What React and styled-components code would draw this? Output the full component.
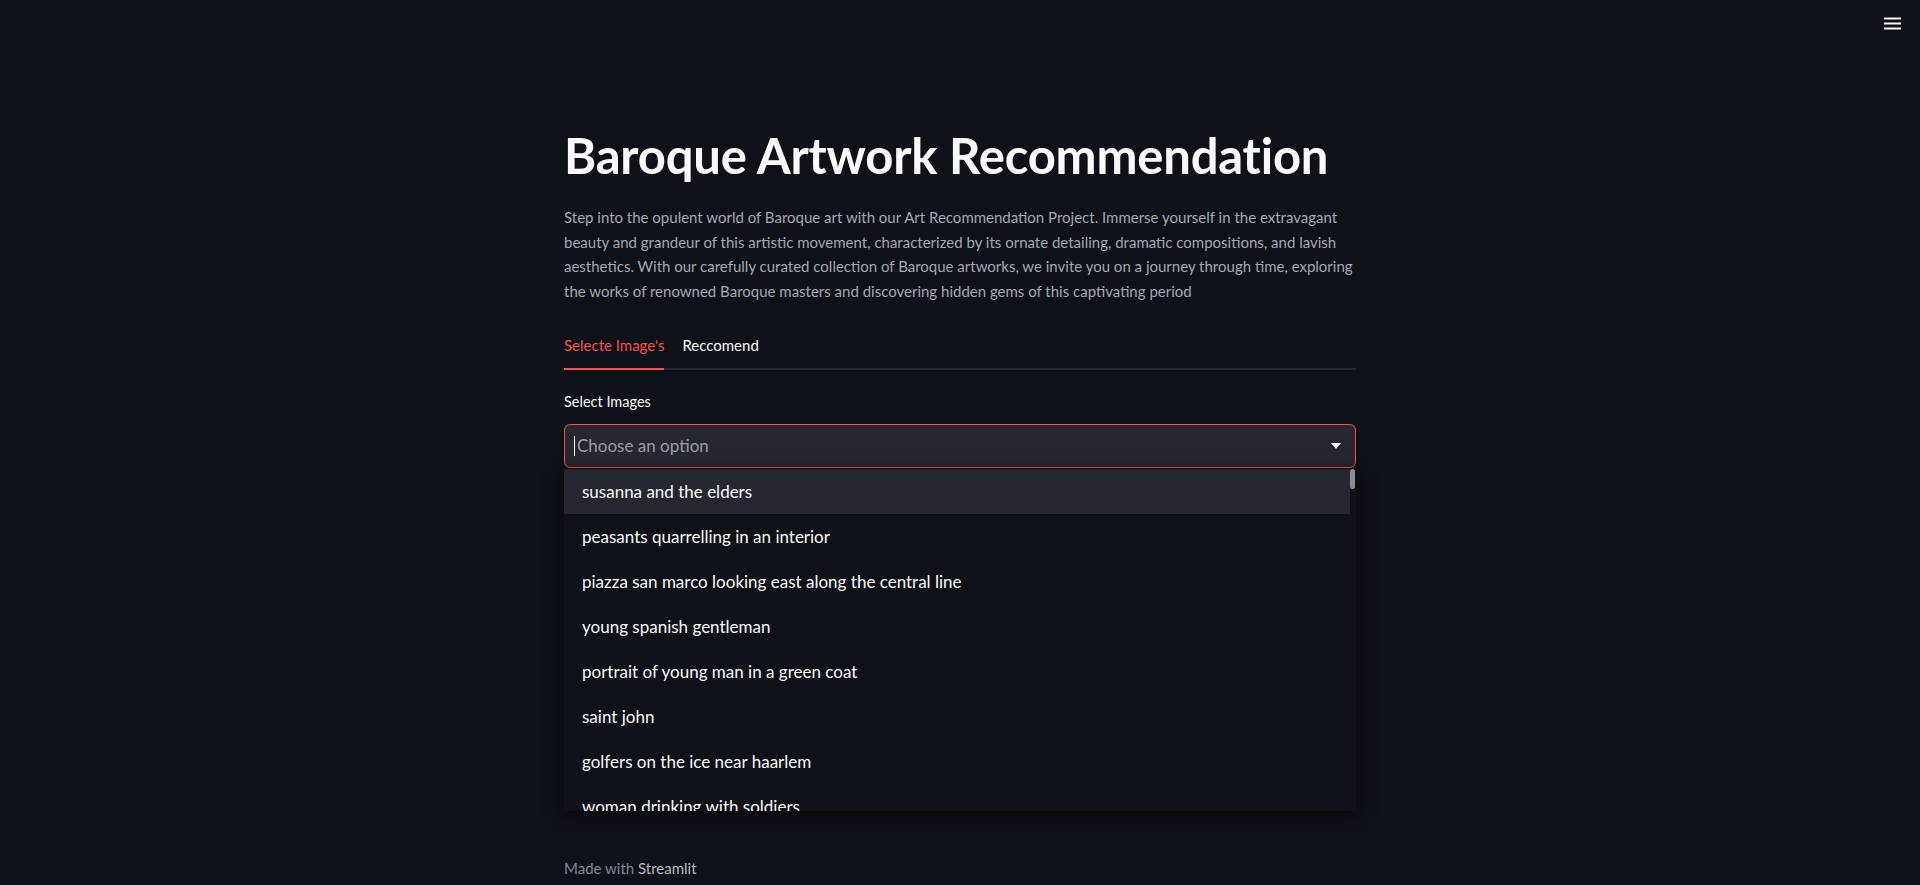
import React, { useState } from "react";
import styled, { createGlobalStyle } from "styled-components";

const GlobalStyle = createGlobalStyle`
  html, body {
    margin: 0;
    padding: 0;
    background: #0e1117;
  }
  * {
    box-sizing: border-box;
  }
`;

const options = [
  "susanna and the elders",
  "peasants quarrelling in an interior",
  "piazza san marco looking east along the central line",
  "young spanish gentleman",
  "portrait of young man in a green coat",
  "saint john",
  "golfers on the ice near haarlem",
  "woman drinking with soldiers",
  "the holy family",
];

const tabs = ["Selecte Image's", "Reccomend"];

const App = () => {
  const [activeTab, setActiveTab] = useState(0);
  const [hovered, setHovered] = useState(0);

  return (
    <>
      <GlobalStyle />
      <Page>
        <MenuButton aria-label="menu">
          <svg width="17" height="13" viewBox="0 0 17 13">
            <rect x="0" y="0.5" width="17" height="2" fill="#fafafa" />
            <rect x="0" y="5.5" width="17" height="2" fill="#fafafa" />
            <rect x="0" y="10.5" width="17" height="2" fill="#fafafa" />
          </svg>
        </MenuButton>

        <Main>
          <Title>Baroque Artwork Recommendation</Title>
          <Intro>
            Step into the opulent world of Baroque art with our Art
            Recommendation Project. Immerse yourself in the extravagant
            <br />
            beauty and grandeur of this artistic movement, characterized by its
            ornate detailing, dramatic compositions, and lavish
            <br />
            aesthetics. With our carefully curated collection of Baroque
            artworks, we invite you on a journey through time, exploring
            <br />
            the works of renowned Baroque masters and discovering hidden gems
            of this captivating period
          </Intro>

          <TabBar>
            {tabs.map((t, i) => (
              <Tab
                key={t}
                $active={activeTab === i}
                onClick={() => setActiveTab(i)}
              >
                {t}
              </Tab>
            ))}
          </TabBar>

          <Label>Select Images</Label>
          <SelectWrap>
            <SelectBox>
              <Caret />
              <Placeholder>Choose an option</Placeholder>
              <Arrow viewBox="0 0 10 6" width="10" height="6">
                <path d="M0 0 L10 0 L5 6 Z" fill="#fafafa" />
              </Arrow>
            </SelectBox>
            <Dropdown>
              <OptionList>
                {options.map((o, i) => (
                  <Option
                    key={o}
                    $highlight={hovered === i}
                    onMouseEnter={() => setHovered(i)}
                  >
                    {o}
                  </Option>
                ))}
              </OptionList>
              <ScrollTrack>
                <ScrollThumb />
              </ScrollTrack>
            </Dropdown>
          </SelectWrap>
        </Main>

        <Footer>
          Made with <FooterLink>Streamlit</FooterLink>
        </Footer>
      </Page>
    </>
  );
};

const font = `"Source Sans Pro", Lato, "Noto Sans", sans-serif`;

const Page = styled.div`
  position: relative;
  min-height: 885px;
  display: flex;
  flex-direction: column;
  align-items: center;
  font-family: ${font};
  color: #fafafa;
`;

const MenuButton = styled.button`
  position: absolute;
  top: 9px;
  right: 14px;
  width: 28px;
  height: 28px;
  display: flex;
  align-items: center;
  justify-content: center;
  background: none;
  border: none;
  padding: 0;
  cursor: pointer;
`;

const Main = styled.main`
  width: 792px;
  flex: 1;
  padding-top: 126px;
`;

const Title = styled.h1`
  margin: 0;
  font-size: 49px;
  font-weight: 700;
  line-height: 1.2;
  letter-spacing: -0.2px;
  color: #fafafa;
`;

const Intro = styled.p`
  margin: 20px 0 0;
  font-size: 15px;
  line-height: 24.8px;
  color: #a3a8b4;
  white-space: nowrap;
`;

const TabBar = styled.div`
  display: flex;
  gap: 18px;
  margin-top: 32px;
  border-bottom: 2px solid #262730;
`;

const Tab = styled.button`
  background: none;
  border: none;
  padding: 0 0 14px;
  margin-bottom: -2px;
  font-family: ${font};
  font-size: 15px;
  cursor: pointer;
  color: ${(p) => (p.$active ? "#ff4b4b" : "#fafafa")};
  border-bottom: 2px solid ${(p) => (p.$active ? "#ff4b4b" : "transparent")};
`;

const Label = styled.div`
  margin-top: 22px;
  font-size: 14.5px;
  line-height: 20px;
  color: #fafafa;
`;

const SelectWrap = styled.div`
  position: relative;
  margin-top: 12px;
`;

const SelectBox = styled.div`
  height: 44px;
  display: flex;
  align-items: center;
  padding: 0 14px 0 9px;
  background: #262730;
  border: 1px solid #ff4b4b;
  border-radius: 6px;
`;

const Caret = styled.span`
  width: 1px;
  height: 20px;
  background: #fafafa;
  margin-right: 2px;
`;

const Placeholder = styled.span`
  flex: 1;
  font-size: 17px;
  color: #9b9da6;
`;

const Arrow = styled.svg`
  display: block;
`;

const Dropdown = styled.div`
  position: absolute;
  top: 45px;
  left: 0;
  right: 0;
  height: 342px;
  display: flex;
  background: #0e1117;
  box-shadow: 0 4px 16px rgba(0, 0, 0, 0.6);
  overflow: hidden;
`;

const OptionList = styled.ul`
  flex: 1;
  list-style: none;
  margin: 0;
  padding: 0;
`;

const Option = styled.li`
  height: 45px;
  display: flex;
  align-items: center;
  padding-left: 18px;
  font-size: 17px;
  color: #fafafa;
  background: ${(p) => (p.$highlight ? "#262730" : "transparent")};
  cursor: pointer;
`;

const ScrollTrack = styled.div`
  width: 6px;
`;

const ScrollThumb = styled.div`
  width: 5px;
  height: 20px;
  border-radius: 3px;
  background: #8a8c93;
`;

const Footer = styled.footer`
  width: 792px;
  padding: 0 0 7px;
  font-size: 15px;
  line-height: 20px;
  color: #808495;
`;

const FooterLink = styled.span`
  color: #b6b9c3;
`;

export default App;
